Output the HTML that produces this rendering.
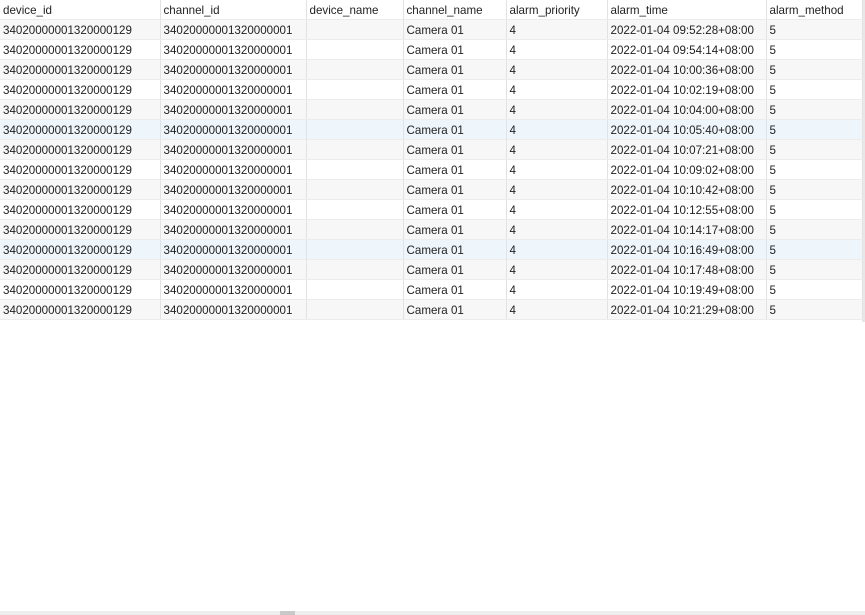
<!DOCTYPE html><html><head><style>
body{margin:0;width:865px;height:615px;background:#fff;font-family:"Liberation Sans",sans-serif;font-size:11.6px;color:#222;overflow:hidden;position:relative}
table{border-collapse:collapse;table-layout:fixed;width:862px;position:absolute;left:0;top:0}
td{height:17px;padding:2px 0 0 3px;border-right:1px solid #e2e2e2;border-bottom:1px solid #ececec;white-space:nowrap;overflow:hidden;line-height:17px}
tr.h td{background:#fff}
tr.g td{background:#f7f7f7}
tr.b td{background:#eef5fb}
.sb{position:absolute;left:0;top:611px;width:865px;height:4px;background:#eee}
.th{position:absolute;left:280px;top:611px;width:15px;height:4px;background:#c8c8c8}
.vl{position:absolute;left:862px;top:0;width:3px;height:322px;background:#e8e8e8}
</style></head><body>
<div class="vl"></div>
<table>
<colgroup><col style="width:160px"><col style="width:146px"><col style="width:97px"><col style="width:103px"><col style="width:101px"><col style="width:159px"><col style="width:96px"></colgroup>
<tr class="h"><td>device_id</td><td>channel_id</td><td>device_name</td><td>channel_name</td><td>alarm_priority</td><td>alarm_time</td><td>alarm_method</td></tr>
<tr class="g"><td>34020000001320000129</td><td>34020000001320000001</td><td></td><td>Camera 01</td><td>4</td><td>2022-01-04 09:52:28+08:00</td><td>5</td></tr>
<tr><td>34020000001320000129</td><td>34020000001320000001</td><td></td><td>Camera 01</td><td>4</td><td>2022-01-04 09:54:14+08:00</td><td>5</td></tr>
<tr class="g"><td>34020000001320000129</td><td>34020000001320000001</td><td></td><td>Camera 01</td><td>4</td><td>2022-01-04 10:00:36+08:00</td><td>5</td></tr>
<tr><td>34020000001320000129</td><td>34020000001320000001</td><td></td><td>Camera 01</td><td>4</td><td>2022-01-04 10:02:19+08:00</td><td>5</td></tr>
<tr class="g"><td>34020000001320000129</td><td>34020000001320000001</td><td></td><td>Camera 01</td><td>4</td><td>2022-01-04 10:04:00+08:00</td><td>5</td></tr>
<tr class="b"><td>34020000001320000129</td><td>34020000001320000001</td><td></td><td>Camera 01</td><td>4</td><td>2022-01-04 10:05:40+08:00</td><td>5</td></tr>
<tr class="g"><td>34020000001320000129</td><td>34020000001320000001</td><td></td><td>Camera 01</td><td>4</td><td>2022-01-04 10:07:21+08:00</td><td>5</td></tr>
<tr><td>34020000001320000129</td><td>34020000001320000001</td><td></td><td>Camera 01</td><td>4</td><td>2022-01-04 10:09:02+08:00</td><td>5</td></tr>
<tr class="g"><td>34020000001320000129</td><td>34020000001320000001</td><td></td><td>Camera 01</td><td>4</td><td>2022-01-04 10:10:42+08:00</td><td>5</td></tr>
<tr><td>34020000001320000129</td><td>34020000001320000001</td><td></td><td>Camera 01</td><td>4</td><td>2022-01-04 10:12:55+08:00</td><td>5</td></tr>
<tr class="g"><td>34020000001320000129</td><td>34020000001320000001</td><td></td><td>Camera 01</td><td>4</td><td>2022-01-04 10:14:17+08:00</td><td>5</td></tr>
<tr class="b"><td>34020000001320000129</td><td>34020000001320000001</td><td></td><td>Camera 01</td><td>4</td><td>2022-01-04 10:16:49+08:00</td><td>5</td></tr>
<tr class="g"><td>34020000001320000129</td><td>34020000001320000001</td><td></td><td>Camera 01</td><td>4</td><td>2022-01-04 10:17:48+08:00</td><td>5</td></tr>
<tr><td>34020000001320000129</td><td>34020000001320000001</td><td></td><td>Camera 01</td><td>4</td><td>2022-01-04 10:19:49+08:00</td><td>5</td></tr>
<tr class="g"><td>34020000001320000129</td><td>34020000001320000001</td><td></td><td>Camera 01</td><td>4</td><td>2022-01-04 10:21:29+08:00</td><td>5</td></tr>
</table>
<div class="sb"></div><div class="th"></div>
</body></html>
